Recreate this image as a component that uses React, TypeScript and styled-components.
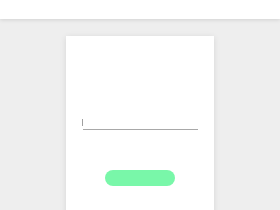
import React from "react";
import styled, { createGlobalStyle } from "styled-components";

const GlobalStyle = createGlobalStyle`
  html, body {
    margin: 0;
    padding: 0;
    height: 100%;
    background: #eeeeee;
    font-family: "Roboto", "Liberation Sans", sans-serif;
    overflow: hidden;
  }
`;

const Page = styled.div`
  display: flex;
  flex-direction: column;
  height: 100vh;
  overflow: hidden;
`;

const Header = styled.header`
  flex: none;
  height: 19px;
  background: #ffffff;
  box-shadow: 0 1px 4px rgba(0, 0, 0, 0.12);
  position: relative;
  z-index: 1;
`;

const Main = styled.main`
  display: flex;
  justify-content: center;
  padding-top: 17px;
`;

const Card = styled.div`
  width: 148px;
  height: 200px;
  background: #ffffff;
  box-shadow: 0 1px 6px rgba(0, 0, 0, 0.1);
  display: flex;
  flex-direction: column;
  align-items: center;
  padding-top: 82px;
  box-sizing: border-box;
`;

const Field = styled.div`
  position: relative;
  display: flex;
`;

const Input = styled.input`
  width: 115px;
  height: 11px;
  margin-left: 1px;
  border: none;
  border-bottom: 1px solid #a8a8a8;
  outline: none;
  padding: 0;
  font-size: 9px;
  background: transparent;
`;

const Cursor = styled.span`
  position: absolute;
  left: 0;
  top: 1px;
  width: 1px;
  height: 7px;
  background: #a0a0a0;
`;

const Button = styled.button`
  margin-top: 40px;
  width: 70px;
  height: 16px;
  border: none;
  border-radius: 8px;
  background: #79f7a9;
  cursor: pointer;
`;

export default function App() {
  return (
    <Page>
      <GlobalStyle />
      <Header />
      <Main>
        <Card>
          <Field>
            <Input type="text" />
            <Cursor />
          </Field>
          <Button />
        </Card>
      </Main>
    </Page>
  );
}
